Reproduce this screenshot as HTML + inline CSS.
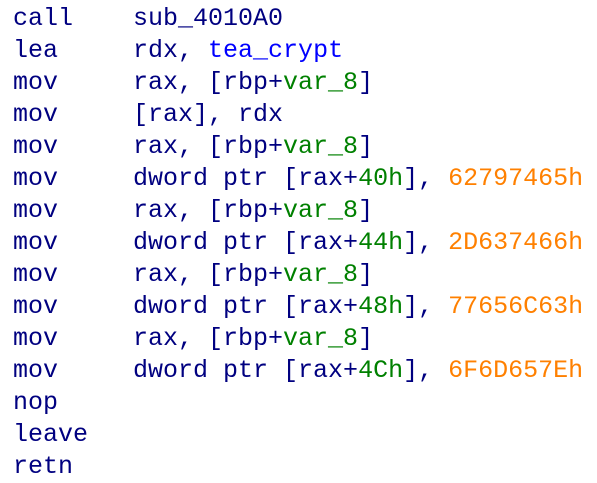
<html><head><style>
body{margin:0;background:#fff;width:597px;height:481px;overflow:hidden}
pre{margin:0;padding:3px 0 0 13px;font-family:"Liberation Mono",monospace;font-size:25px;line-height:32px;color:#000080}
.b{color:#0000ff}.g{color:#008000}.o{color:#ff8000}
</style></head><body><pre>call    sub_4010A0
lea     rdx, <span class="b">tea_crypt</span>
mov     rax, [rbp+<span class="g">var_8</span>]
mov     [rax], rdx
mov     rax, [rbp+<span class="g">var_8</span>]
mov     dword ptr [rax+<span class="g">40h</span>], <span class="o">62797465h</span>
mov     rax, [rbp+<span class="g">var_8</span>]
mov     dword ptr [rax+<span class="g">44h</span>], <span class="o">2D637466h</span>
mov     rax, [rbp+<span class="g">var_8</span>]
mov     dword ptr [rax+<span class="g">48h</span>], <span class="o">77656C63h</span>
mov     rax, [rbp+<span class="g">var_8</span>]
mov     dword ptr [rax+<span class="g">4Ch</span>], <span class="o">6F6D657Eh</span>
nop
leave
retn
</pre></body></html>
